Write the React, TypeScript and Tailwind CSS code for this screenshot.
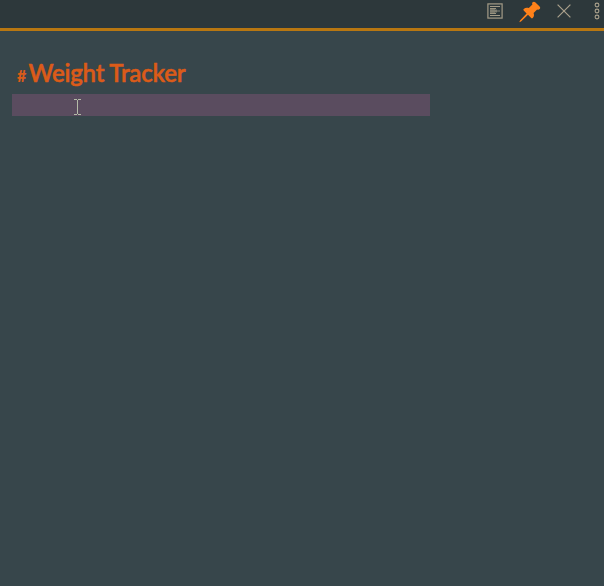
function ReadingIcon() {
  return (
    <svg width="16" height="16" viewBox="0 0 16 16" fill="none" stroke="#a39b87" strokeWidth="1">
      <rect x="0.9" y="0.9" width="14.200" height="14.200" strokeWidth="1.2" />
      <path d="M3 3.5h10M3 12.5h10" />
      <path d="M3 5h5v1.500h2v3H8V11H3z" fill="#747469" stroke="none" />
      <path d="M3 5.5h6M3 10.500h6" stroke="#99937f" />
      <path d="M3 8h10" stroke="#89877a" />
    </svg>
  );
}

function PinIcon() {
  return (
    <svg width="22" height="22" viewBox="0 0 22 22" fill="#ff8119">
      <path d="M13.6 1.2c.9-.8 1.8-.7 2.6 0l4.4 4.4c.8.8.8 1.8 0 2.5-.8.7-1.7.7-2.5.3l-3.5 3.5c.8 1.9.4 3.7-.9 5.1-.5.5-1 .5-1.5 0l-3.2-3.2-7 6.8-1.7.7.7-1.8 6.6-7.1L4.700 9.500c-.5-.5-.5-1 0-1.500 1.400-1.300 3.300-1.600 5.100-.9l3.600-3.500c-.4-.8-.4-1.700.2-2.400z" />
    </svg>
  );
}

function CloseIcon() {
  return (
    <svg width="14" height="14" viewBox="0 0 14 14" fill="none" stroke="#aaa18c" strokeWidth="1.2">
      <path d="M0.600 0.600l12.800 12.800M13.400 0.600L0.600 13.400" />
    </svg>
  );
}

function MoreIcon() {
  return (
    <svg width="6" height="18" viewBox="0 0 6 18" fill="none" stroke="#aaa18c" strokeWidth="1.1">
      <circle cx="3" cy="3" r="1.900" />
      <circle cx="3" cy="9" r="1.900" />
      <circle cx="3" cy="15" r="1.900" />
    </svg>
  );
}

function TextCursor() {
  return (
    <svg className="mt-[5px] ml-[62px]" width="7" height="16" viewBox="0 0 7 16" fill="none" stroke="#b4bba8" shapeRendering="crispEdges">
      <path d="M0 0.500h3M4 0.500h3M3.500 1v14M0 15.500h3M4 15.500h3" />
    </svg>
  );
}

export default function App() {
  return (
    <div className="flex h-[586px] w-full flex-col overflow-hidden bg-[#37464b] font-['Lato',sans-serif]">
      <header className="flex h-[31px] shrink-0 items-start justify-end border-b-3 border-[#b87711] bg-[#2d383b] pr-1">
        <div className="mt-[3px] mr-4"><ReadingIcon /></div>
        <div className="mt-px mr-4"><PinIcon /></div>
        <div className="mt-1 mr-[23px]"><CloseIcon /></div>
        <div className="mt-[2px]"><MoreIcon /></div>
      </header>
      <main className="flex flex-col pl-3">
        <h1 className="mt-[26px] flex h-[37px] items-baseline pl-[5px] leading-[32px] text-[#db5b19]">
          <span className="w-[11.5px] text-[16px] font-black">#</span>
          <span className="text-[24px] font-semibold tracking-[-0.2px] whitespace-nowrap [-webkit-text-stroke:0.5px_#db5b19]">Weight Tracker</span>
        </h1>
        <div className="flex h-[22px] w-[418px] items-start bg-[#5a4c5f]">
          <TextCursor />
        </div>
      </main>
    </div>
  );
}
